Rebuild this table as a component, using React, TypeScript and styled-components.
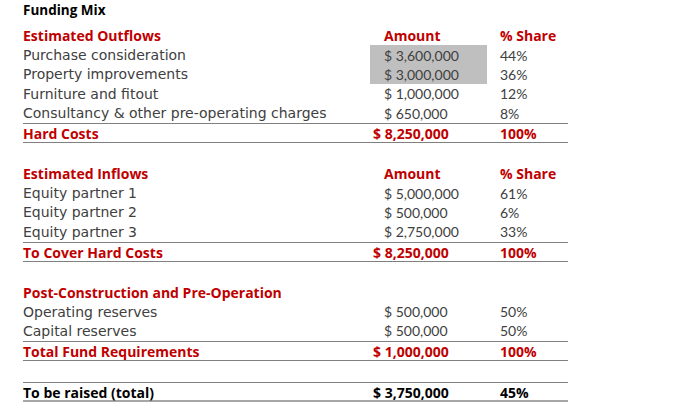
import React from 'react';
import styled, {createGlobalStyle} from 'styled-components';

const GlobalStyle = createGlobalStyle`
  body {
    margin: 0;
    background: #ffffff;
  }
`;

const RED = '#c00000';
const TEXT = '#404040';
const RULE = '#808080';

type Line = {
    label: string;
    amount: string;
    share: string;
    highlight?: boolean;
};

type Block = {
    heading: string;
    showColumns: boolean;
    items: Line[];
    total: Line;
};

const blocks: Block[] = [
    {
        heading: 'Estimated Outflows',
        showColumns: true,
        items: [
            {label: 'Purchase consideration', amount: '$ 3,600,000', share: '44%', highlight: true},
            {label: 'Property improvements', amount: '$ 3,000,000', share: '36%', highlight: true},
            {label: 'Furniture and fitout', amount: '$ 1,000,000', share: '12%'},
            {label: 'Consultancy & other pre-operating charges', amount: '$ 650,000', share: '8%'},
        ],
        total: {label: 'Hard Costs', amount: '$ 8,250,000', share: '100%'},
    },
    {
        heading: 'Estimated Inflows',
        showColumns: true,
        items: [
            {label: 'Equity partner 1', amount: '$ 5,000,000', share: '61%'},
            {label: 'Equity partner 2', amount: '$ 500,000', share: '6%'},
            {label: 'Equity partner 3', amount: '$ 2,750,000', share: '33%'},
        ],
        total: {label: 'To Cover Hard Costs', amount: '$ 8,250,000', share: '100%'},
    },
    {
        heading: 'Post-Construction and Pre-Operation',
        showColumns: false,
        items: [
            {label: 'Operating reserves', amount: '$ 500,000', share: '50%'},
            {label: 'Capital reserves', amount: '$ 500,000', share: '50%'},
        ],
        total: {label: 'Total Fund Requirements', amount: '$ 1,000,000', share: '100%'},
    },
];

const Sheet = styled.div`
  width: 545px;
  padding-left: 23px;
  font-family: Lato, "Liberation Sans", sans-serif;
  font-size: 14px;
  color: ${TEXT};
`;

const Title = styled.div`
  height: 19px;
  margin-bottom: 7px;
  display: flex;
  align-items: center;
  font-family: "Open Sans", sans-serif;
  font-size: 13.5px;
  font-weight: bold;
  color: #000000;
`;

const Section = styled.section`
  margin-bottom: 21px;
`;

// bold rows (headings and totals) use a wider bold face than the figures
const Row = styled.div<{ $kind: 'head' | 'item' | 'total' | 'grand' }>`
  display: grid;
  grid-template-columns: 347px 117px 81px;
  box-sizing: border-box;
  height: ${p => (p.$kind === 'total' || p.$kind === 'grand' ? '20px' : '19.4px')};
  align-items: stretch;
  font-family: ${p => (p.$kind === 'item' ? 'Lato, sans-serif' : '"Open Sans", sans-serif')};
  font-weight: ${p => (p.$kind === 'item' ? 'normal' : 'bold')};
  color: ${p => (p.$kind === 'item' ? TEXT : p.$kind === 'grand' ? '#000000' : RED)};
  border-top: ${p => (p.$kind === 'total' || p.$kind === 'grand' ? `1px solid ${RULE}` : 'none')};
  border-bottom: ${p =>
          p.$kind === 'total' ? `1px solid ${RULE}` : p.$kind === 'grand' ? '2px solid #a6a6a6' : 'none'};
`;

const Cell = styled.div`
  display: flex;
  align-items: center;
  white-space: nowrap;
`;

const ItemLabel = styled(Cell)`
  font-family: "DejaVu Sans", sans-serif;
`;

const AmountCell = styled(Cell)<{ $highlight?: boolean; $total?: boolean }>`
  padding-left: ${p => (p.$total ? '3px' : '14px')};
  background: ${p => (p.$highlight ? '#bfbfbf' : 'transparent')};
`;

const ShareCell = styled(Cell)`
  padding-left: 13px;
`;

const App: React.FC = () => {
    return (
        <>
            <GlobalStyle/>
            <Sheet>
                <Title>Funding Mix</Title>
                {blocks.map(block => (
                    <Section key={block.heading}>
                        <Row $kind="head">
                            <Cell>{block.heading}</Cell>
                            <AmountCell>{block.showColumns ? 'Amount' : ''}</AmountCell>
                            <ShareCell>{block.showColumns ? '% Share' : ''}</ShareCell>
                        </Row>
                        {block.items.map(item => (
                            <Row $kind="item" key={item.label}>
                                <ItemLabel>{item.label}</ItemLabel>
                                <AmountCell $highlight={item.highlight}>{item.amount}</AmountCell>
                                <ShareCell>{item.share}</ShareCell>
                            </Row>
                        ))}
                        <Row $kind="total">
                            <Cell>{block.total.label}</Cell>
                            <AmountCell $total>{block.total.amount}</AmountCell>
                            <ShareCell>{block.total.share}</ShareCell>
                        </Row>
                    </Section>
                ))}
                <Section>
                    <Row $kind="grand">
                        <Cell>To be raised (total)</Cell>
                        <AmountCell $total>$ 3,750,000</AmountCell>
                        <ShareCell>45%</ShareCell>
                    </Row>
                </Section>
            </Sheet>
        </>
    );
};

export default App;
